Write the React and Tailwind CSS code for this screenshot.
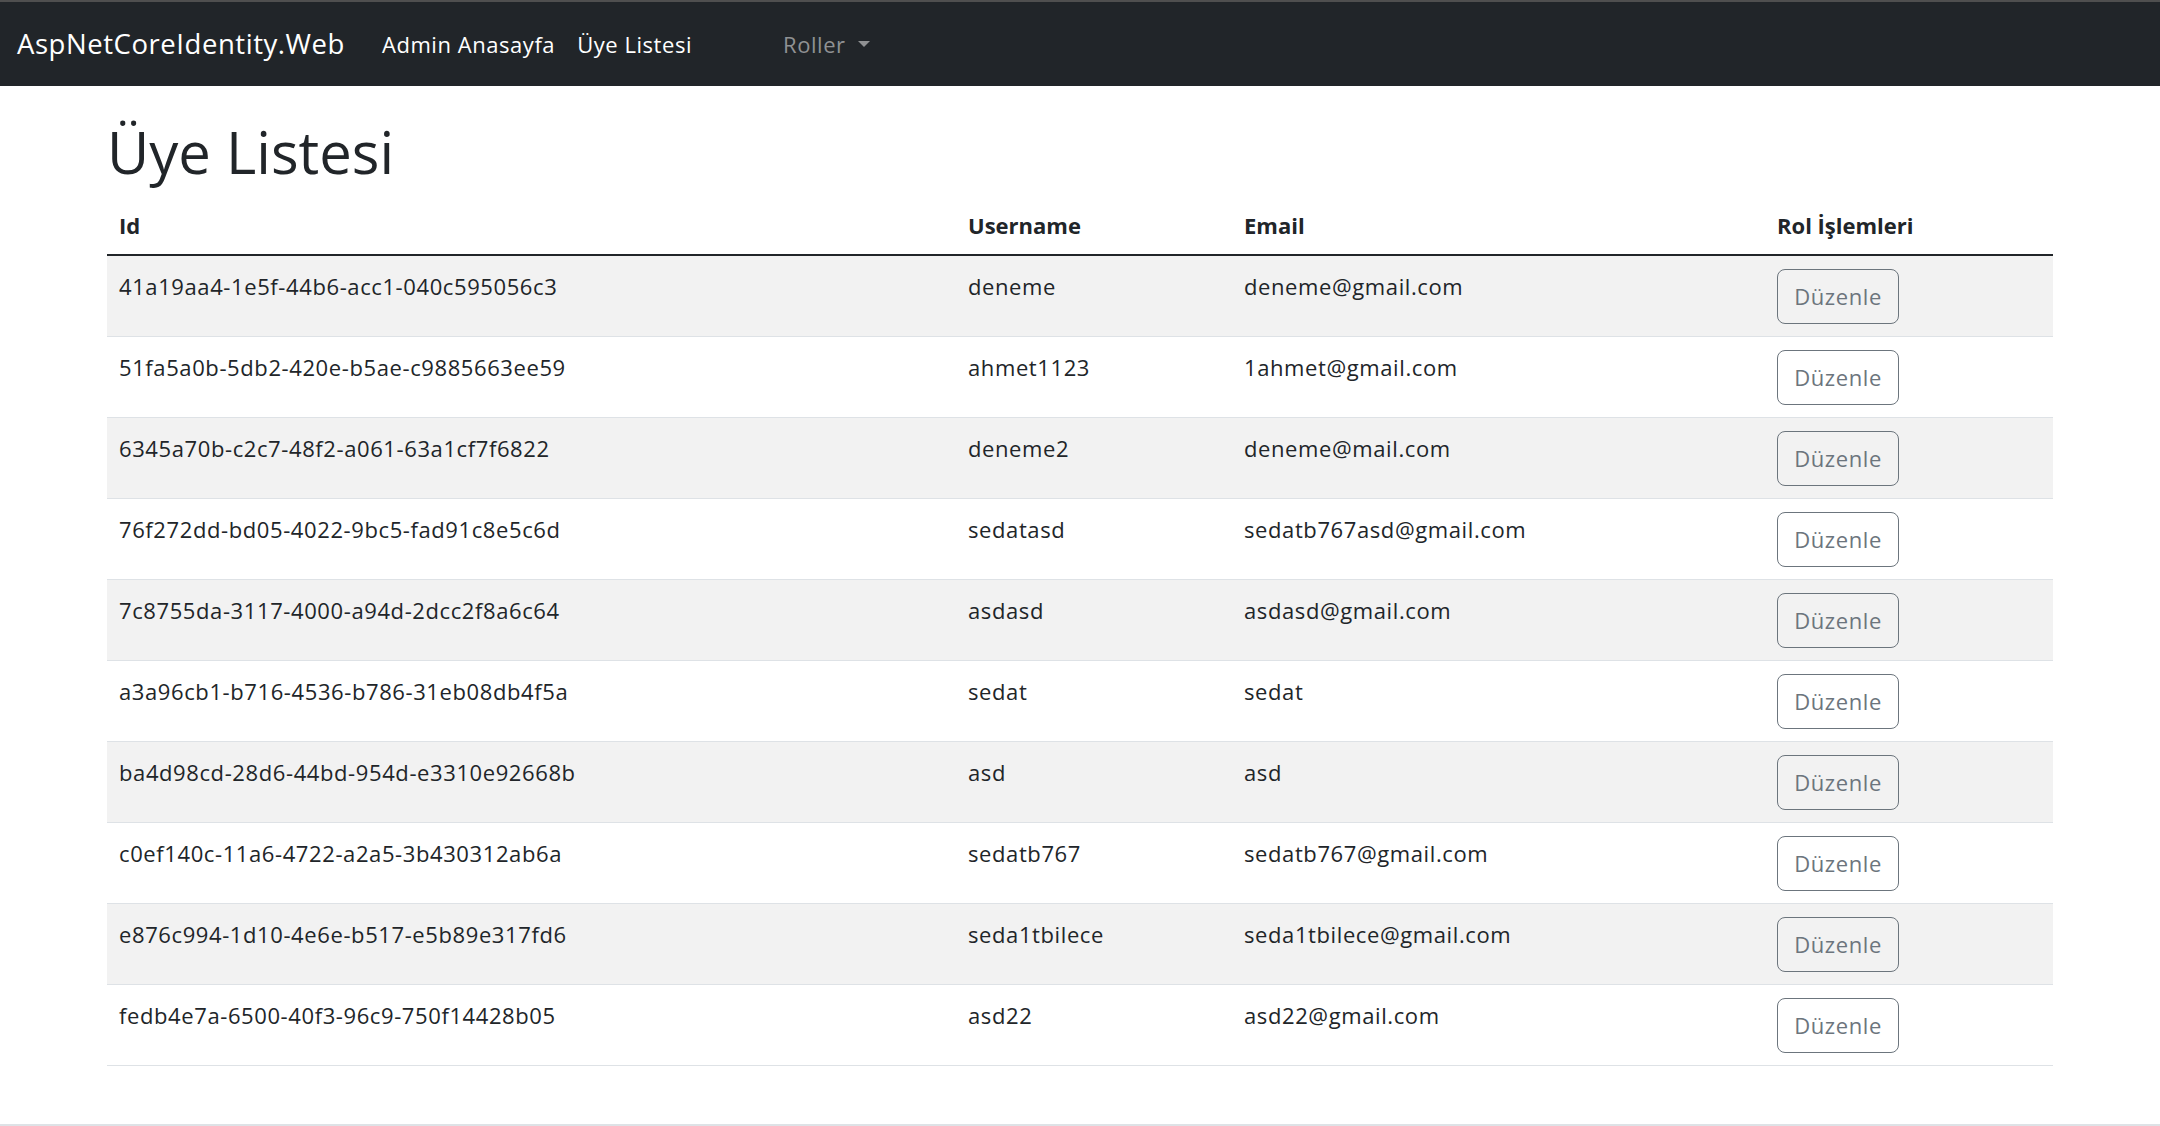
import React from "react";

const users = [
  ["41a19aa4-1e5f-44b6-acc1-040c595056c3", "deneme", "deneme@gmail.com"],
  ["51fa5a0b-5db2-420e-b5ae-c9885663ee59", "ahmet1123", "1ahmet@gmail.com"],
  ["6345a70b-c2c7-48f2-a061-63a1cf7f6822", "deneme2", "deneme@mail.com"],
  ["76f272dd-bd05-4022-9bc5-fad91c8e5c6d", "sedatasd", "sedatb767asd@gmail.com"],
  ["7c8755da-3117-4000-a94d-2dcc2f8a6c64", "asdasd", "asdasd@gmail.com"],
  ["a3a96cb1-b716-4536-b786-31eb08db4f5a", "sedat", "sedat"],
  ["ba4d98cd-28d6-44bd-954d-e3310e92668b", "asd", "asd"],
  ["c0ef140c-11a6-4722-a2a5-3b430312ab6a", "sedatb767", "sedatb767@gmail.com"],
  ["e876c994-1d10-4e6e-b517-e5b89e317fd6", "seda1tbilece", "seda1tbilece@gmail.com"],
  ["fedb4e7a-6500-40f3-96c9-750f14428b05", "asd22", "asd22@gmail.com"],
];

export default function App() {
  return (
    <div className="min-h-[1126px] bg-white text-[#212529] font-['Open_Sans',sans-serif] flex flex-col">
      <div className="h-[2px] bg-[#4f4f4f]" />
      <nav className="h-[84px] bg-[#212529] flex items-center px-[17px] tracking-[0.55px]">
        <span className="text-[27.5px] text-white mr-[26px]">AspNetCoreIdentity.Web</span>
        <a className="text-[22px] text-white px-[11px]">Admin Anasayfa</a>
        <a className="text-[22px] text-white px-[11px]">Üye Listesi</a>
        <a className="text-[22px] text-[#8f9193] ml-[69px] px-[11px] flex items-center">
          Roller
          <span className="ml-[12px] w-0 h-0 border-l-[6.5px] border-r-[6.5px] border-t-[6px] border-l-transparent border-r-transparent border-t-[#8f9193]" />
        </a>
      </nav>
      <main className="w-[1946px] mx-auto flex-1 pt-[31px]">
        <h1 className="text-[58px] leading-[70px] mb-[10px]">Üye Listesi</h1>
        <table className="w-full text-[22px] leading-[33px] border-collapse">
          <thead>
            <tr className="border-b-2 border-[#212529] text-left">
              <th className="w-[849px] px-3 py-3 font-bold">Id</th>
              <th className="w-[276px] px-3 py-3 font-bold">Username</th>
              <th className="w-[533px] px-3 py-3 font-bold">Email</th>
              <th className="px-3 py-3 font-bold">Rol İşlemleri</th>
            </tr>
          </thead>
          <tbody className="tracking-[0.6px]">
            {users.map((u, i) => (
              <tr key={u[0]} className={`border-b border-[#dee2e6] ${i % 2 === 0 ? "bg-[#f2f2f2]" : "bg-white"}`}>
                <td className="px-3 pt-[14px] pb-[11px] align-top">{u[0]}</td>
                <td className="px-3 pt-[14px] pb-[11px] align-top">{u[1]}</td>
                <td className="px-3 pt-[14px] pb-[11px] align-top">{u[2]}</td>
                <td className="px-3 pt-[13px] pb-3 align-top">
                  <button className="h-[55px] w-[122px] border border-[#6c757d] rounded-[8px] text-[#6c757d] text-[22px]">
                    Düzenle
                  </button>
                </td>
              </tr>
            ))}
          </tbody>
        </table>
      </main>
      <div className="h-[2px] bg-[#dee2e6] mt-auto" />
    </div>
  );
}
